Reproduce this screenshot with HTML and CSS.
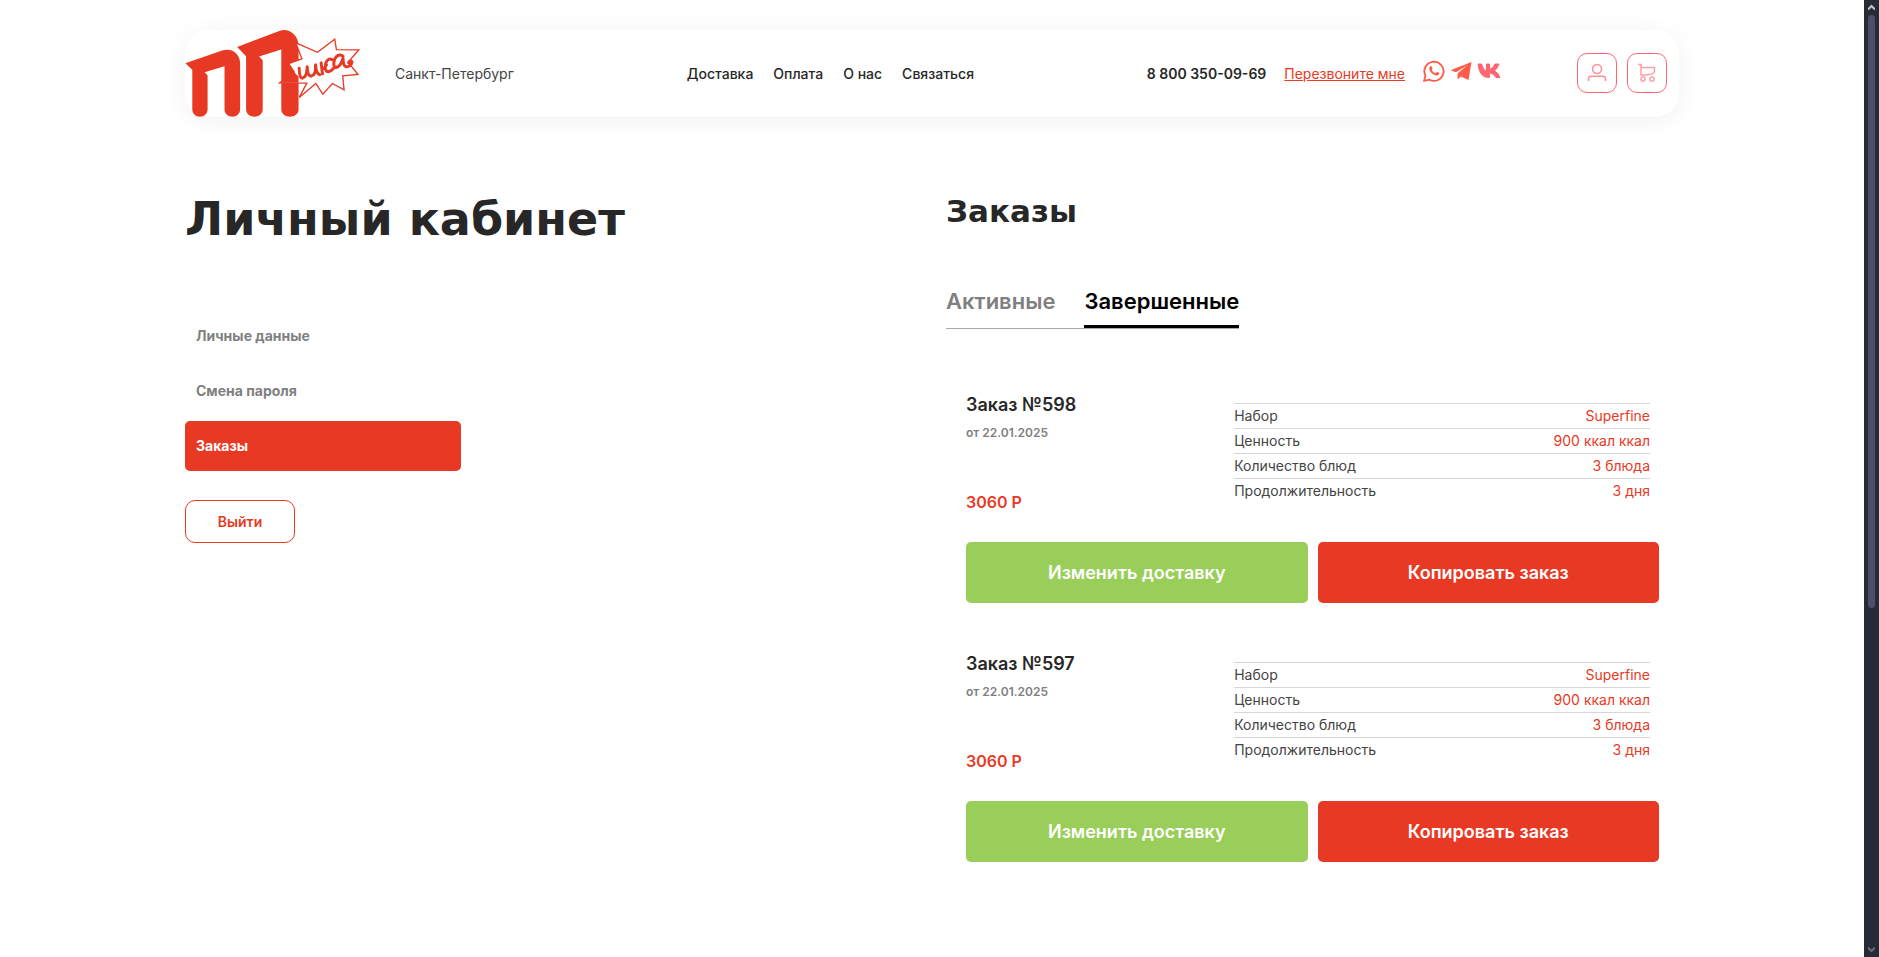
FILE: index.html
```html
<!DOCTYPE html>
<html lang="ru">
<head>
<meta charset="utf-8">
<title>Личный кабинет</title>
<link rel="stylesheet" href="styles.css">
</head>
<body>
<div class="viewport">
<div class="page">
  <header class="header">
    <a class="logo" href="#" aria-label="ППшка">
      <svg viewBox="45 45 525 262" width="175" height="87" aria-hidden="true">
        <g fill="#e83924">
          <path d="M45 145L158 106C190 98 210 120 210 146V284C210 314 163 314 163 284V154L103 172L112 181V284C112 314 66 314 66 284V165Z"/>
          <path d="M201 96L330 47C360 38 386 64 386 92V284C386 314 334 314 334 284V104L267 125L278 136V284C278 314 228 314 228 284V124Z"/>
        </g>
        <path d="M378 84L443 112L495 73L500 104L567 105L535 142L565 179L519 183L523 225L488 206L459 238L438 206L388 248L411 205L329 204L373 172L356 146L396 132Z" fill="#fff" stroke="#e83924" stroke-width="4"/>
        <path d="M329 204H386V186L373 172Z" fill="#e83924"/>
        <path d="M388 160Q388 190 398 190Q411 187 412 156Q413 184 424 184Q439 181 437 150Q439 176 450 180M454 144L458 177M457 164Q465 160 470 150M487 134Q474 128 468 145Q462 169 476 171Q486 169 493 158M520 124Q505 114 495 132Q487 154 499 158Q512 156 520 130Q520 153 529 156Q545 155 547 141Q542 135 537 144" fill="none" stroke="#e83924" stroke-width="9" stroke-linecap="round" stroke-linejoin="round"/>
      </svg>
    </a>
    <span class="city">Санкт-Петербург</span>
    <nav class="menu">
      <a href="#">Доставка</a>
      <a href="#">Оплата</a>
      <a href="#">О нас</a>
      <a href="#">Связаться</a>
    </nav>
    <div class="contacts">
      <a class="phone" href="tel:88003500969">8 800 350-09-69</a>
      <a class="callback" href="#">Перезвоните мне</a>
      <div class="social">
        <a href="#" aria-label="WhatsApp">
          <svg width="22" height="22" viewBox="0 0 22 22"><path d="M1 21L2.500 15.800A9.600 9.600 0 1 1 6.200 19.600Z" fill="none" stroke="#ff5c47" stroke-width="1.800" stroke-linejoin="round"/><path d="M7.300 6.200Q8.200 5.700 8.700 6.600L9.500 8.500Q9.600 9 8.700 10Q10 12.300 12.400 13.200L13.500 12Q14 11.700 16 12.800Q16.600 13.300 15.800 14.600Q14.500 16 12.300 15.200Q8 13.800 6.300 9.600Q5.800 7.400 7.300 6.200Z" fill="#ff5c47"/></svg>
        </a>
        <a href="#" aria-label="Telegram">
          <svg width="22" height="22" viewBox="0 0 22 22"><path d="M21.500 2L.5 10.200L6 12.300L17 5.500L7.600 13.400V19.500L10.700 16.500L18.500 20Z" fill="#ff5c47"/></svg>
        </a>
        <a href="#" aria-label="ВКонтакте">
          <svg width="24" height="22" viewBox="0 0 24 22"><path d="M1 4H4.500Q6 10 9.500 11.500V4H12.500V9.500Q16 8.500 18 4H22Q20.500 8.500 17.500 10.800Q21.500 13 23 17.500H19Q16.500 13.500 12.500 12.500V17.500H11.500Q2.500 17.500 1 4Z" fill="#ff6473" stroke="#ff6473" stroke-linejoin="round"/></svg>
        </a>
      </div>
    </div>
    <div class="actions">
      <a class="action" href="#" aria-label="Профиль">
        <svg width="20" height="20" viewBox="0 0 20 20" fill="none" stroke="#ff8f99" stroke-width="1.500"><circle cx="10" cy="6" r="4.500"/><path d="M1.500 18V16Q1.500 13.300 4.200 13.300H15.800Q18.500 13.300 18.500 16V18"/></svg>
      </a>
      <a class="action" href="#" aria-label="Корзина">
        <svg width="20" height="20" viewBox="0 0 20 20" fill="none" stroke="#ffa0a8" stroke-width="1.500"><path d="M1 1.500H4V12H6M4 4.500H17.500V9L15 11L5 12.500"/><circle cx="6" cy="16" r="2.100"/><circle cx="15" cy="16" r="2.100"/></svg>
      </a>
    </div>
  </header>
  <main class="account">
    <section class="side">
      <h1 class="title">Личный кабинет</h1>
      <nav class="side-nav">
        <a class="side-link" href="#">Личные данные</a>
        <a class="side-link" href="#">Смена пароля</a>
        <a class="side-link side-link-active" href="#">Заказы</a>
      </nav>
      <button class="logout" type="button">Выйти</button>
    </section>
    <section class="orders">
      <h2 class="subtitle">Заказы</h2>
      <div class="tabs" role="tablist">
        <button class="tab" type="button" role="tab">Активные</button>
        <button class="tab tab-active" type="button" role="tab" aria-selected="true">Завершенные</button>
      </div>
      <article class="order">
        <div class="order-body">
          <div class="order-info">
            <h3 class="order-name">Заказ №598</h3>
            <p class="order-date">от 22.01.2025</p>
            <p class="order-price">3060 Р</p>
          </div>
          <table class="specs">
            <tr><th scope="row">Набор</th><td>Superfine</td></tr>
            <tr><th scope="row">Ценность</th><td>900 ккал ккал</td></tr>
            <tr><th scope="row">Количество блюд</th><td>3 блюда</td></tr>
            <tr><th scope="row">Продолжительность</th><td>3 дня</td></tr>
          </table>
        </div>
        <div class="order-buttons">
          <button class="button button-green" type="button">Изменить доставку</button>
          <button class="button" type="button">Копировать заказ</button>
        </div>
      </article>
      <article class="order">
        <div class="order-body">
          <div class="order-info">
            <h3 class="order-name">Заказ №597</h3>
            <p class="order-date">от 22.01.2025</p>
            <p class="order-price">3060 Р</p>
          </div>
          <table class="specs">
            <tr><th scope="row">Набор</th><td>Superfine</td></tr>
            <tr><th scope="row">Ценность</th><td>900 ккал ккал</td></tr>
            <tr><th scope="row">Количество блюд</th><td>3 блюда</td></tr>
            <tr><th scope="row">Продолжительность</th><td>3 дня</td></tr>
          </table>
        </div>
        <div class="order-buttons">
          <button class="button button-green" type="button">Изменить доставку</button>
          <button class="button" type="button">Копировать заказ</button>
        </div>
      </article>
    </section>
  </main>
</div>
<div class="scrollbar" aria-hidden="true">
  <svg width="7" height="7" viewBox="0 0 7 7"><path d="M0 5.500L3.500 2L7 5.500" fill="none" stroke="#c6c6c0" stroke-width="2"/></svg>
  <div class="track"><div class="thumb"></div></div>
  <svg width="7" height="7" viewBox="0 0 7 7"><path d="M0 1.500L3.500 5L7 1.500" fill="none" stroke="#6c6c6a" stroke-width="2"/></svg>
</div>
</div>
</body>
</html>
```
FILE: styles.css
```css
* {
  box-sizing: border-box;
}

body {
  margin: 0;
  background: #fff;
  color: #272727;
  font-family: Inter, "Liberation Sans", sans-serif;
  font-size: 14px;
  line-height: 20px;
}

h1, h2, h3, p {
  margin: 0;
}

a {
  color: inherit;
  text-decoration: none;
}

button {
  font: inherit;
  cursor: pointer;
}

svg {
  display: block;
}

.viewport {
  display: flex;
  height: 100vh;
}

.page {
  flex: 1;
  overflow: hidden;
  padding: 30px 185px 0;
}

.header {
  display: flex;
  align-items: center;
  height: 87px;
  padding-right: 12px;
  border-radius: 24px;
  box-shadow: 0 4px 24px rgba(0, 0, 0, 0.06);
}

.city {
  margin-left: 35px;
  color: #444;
}

.menu {
  display: flex;
  gap: 20px;
  margin-left: 173px;
  font-weight: 500;
}

.contacts {
  display: flex;
  align-items: center;
  gap: 18px;
  margin-left: auto;
}

.phone {
  font-weight: 600;
}

.callback {
  color: #e83924;
  text-decoration: underline;
}

.social {
  display: flex;
  gap: 5px;
  padding-bottom: 6px;
}

.actions {
  display: flex;
  gap: 10px;
  margin-left: 76px;
  padding-bottom: 2px;
}

.action {
  display: grid;
  place-items: center;
  width: 40px;
  height: 40px;
  border: 1px solid #ff6473;
  border-radius: 10px;
}

.account {
  display: grid;
  grid-template-columns: 1fr 1fr;
  gap: 28px;
  padding-top: 76px;
}

.title,
.subtitle {
  font-family: "DejaVu Sans", sans-serif;
  font-weight: 700;
}

.title {
  font-size: 46px;
  line-height: 52px;
}

.subtitle {
  font-size: 31px;
  line-height: 36px;
}

.side-nav {
  display: grid;
  gap: 5px;
  width: 276px;
  margin-top: 66px;
}

.side-link {
  padding: 15px 11px;
  border-radius: 5px;
  color: #808080;
  font-weight: 700;
}

.side-link-active {
  background: #e83924;
  color: #fff;
}

.logout {
  width: 110px;
  height: 43px;
  margin-top: 29px;
  border: 1px solid #e83924;
  border-radius: 10px;
  background: #fff;
  color: #e83924;
  font-weight: 600;
}

.tabs {
  display: inline-flex;
  gap: 29px;
  margin-top: 57px;
  border-bottom: 1px solid #a8a8a8;
}

.tab {
  padding: 0 0 9px;
  border: 0;
  border-bottom: 3px solid transparent;
  background: none;
  color: #808080;
  font-size: 22px;
  font-weight: 600;
  line-height: 30px;
}

.tab-active {
  border-color: #000;
  color: #000;
}

.order {
  padding: 0 20px;
  margin-top: 47px;
}

.tabs + .order {
  margin-top: 62px;
}

.order-body {
  display: flex;
  justify-content: space-between;
}

.order-name {
  font-size: 18px;
  font-weight: 600;
  line-height: 28px;
}

.order-date {
  margin-top: 4px;
  color: #808080;
  font-size: 12px;
  font-weight: 600;
}

.order-price {
  margin-top: 47px;
  color: #e83924;
  font-size: 16px;
  font-weight: 600;
  line-height: 24px;
}

.specs {
  width: 60%;
  margin: 12px 9px 0 0;
  border-collapse: collapse;
  align-self: flex-start;
}

.specs th,
.specs td {
  height: 25px;
  padding: 2px 0;
  border-top: 1px solid #d6d6d6;
}

.specs th {
  color: #444;
  font-weight: 400;
  text-align: left;
}

.specs td {
  color: #e83924;
  text-align: right;
}

.order-buttons {
  display: grid;
  grid-template-columns: 1fr 1fr;
  gap: 10px;
  margin-top: 28px;
}

.button {
  height: 61px;
  border: 0;
  border-radius: 5px;
  background: #e83924;
  color: #fff;
  font-size: 18px;
  font-weight: 600;
}

.button-green {
  background: #9ace5a;
}

.scrollbar {
  display: flex;
  flex-direction: column;
  align-items: center;
  width: 15px;
  padding: 4px 0;
  background: #272b38;
}

.track {
  flex: 1;
  width: 7px;
  padding: 4px 0;
}

.thumb {
  height: 64%;
  border-radius: 4px;
  background: #4d4f68;
}
```
